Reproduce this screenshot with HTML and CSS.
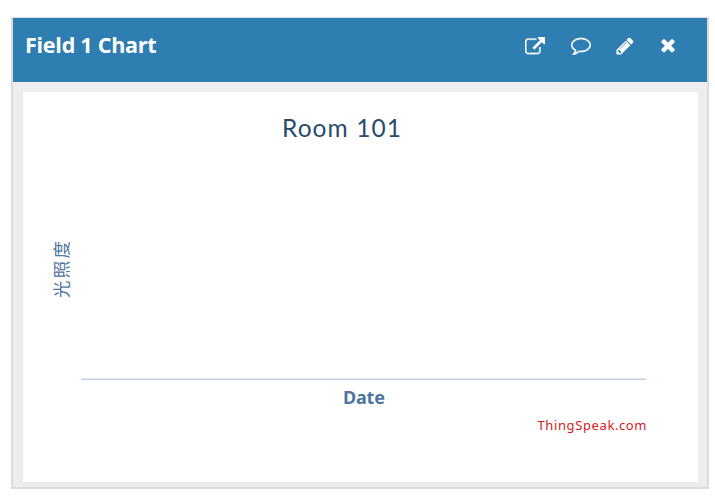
FILE: index.html
```html
<!DOCTYPE html>
<html lang="en">
<head>
<meta charset="utf-8">
<title>Field 1 Chart</title>
<link rel="stylesheet" href="styles.css">
</head>
<body>
<section class="card">
  <header class="card-header">
    <h1 class="title">Field 1 Chart</h1>
    <nav class="actions">
      <svg class="icon icon-link" viewBox="0 0 1792 1792"><path d="M1408 928v320q0 119-84.500 203.500t-203.500 84.500h-832q-119 0-203.500-84.500t-84.500-203.500v-832q0-119 84.500-203.500t203.500-84.500h704q14 0 23 9t9 23v64q0 14-9 23t-23 9h-704q-66 0-113 47t-47 113v832q0 66 47 113t113 47h832q66 0 113-47t47-113v-320q0-14 9-23t23-9h64q14 0 23 9t9 23zm384-864v512q0 26-19 45t-45 19-45-19l-176-176-652 652q-10 10-23 10t-23-10l-114-114q-10-10-10-23t10-23l652-652-176-176q-19-19-19-45t19-45 45-19h512q26 0 45 19t19 45z"/></svg>
      <svg class="icon icon-comment" viewBox="0 0 1792 1792"><path d="M896 384q-204 0-381.500 69.500t-282 187.500-104.500 255q0 112 71.500 213.500t201.500 175.500l87 50-27 96q-24 91-70 172 152-63 275-171l43-38 57 6q69 8 130 8 204 0 381.500-69.500t282-187.500 104.500-255-104.500-255-282-187.500-381.500-69.500zm896 512q0 174-120 321.500t-326 233-450 85.500q-70 0-145-8-198 175-460 242-49 14-114 22h-5q-15 0-27-10.500t-16-27.500v-1q-3-4-.5-12t2-10 4.500-9.500l6-9 7-8.500 8-9q7-8 31-34.500t34.500-38 31-39.500 32.500-51 27-59 26-76q-157-89-247.500-220t-90.500-281q0-174 120-321.500t326-233 450-85.500 450 85.500 326 233 120 321.500z"/></svg>
      <svg class="icon icon-pencil" viewBox="0 0 1792 1792"><path d="M491 1536l91-91-235-235-91 91v107h128v128h107zm523-928q0-22-22-22-10 0-17 7l-542 542q-7 7-7 17 0 22 22 22 10 0 17-7l542-542q7-7 7-17zm-54-192l416 416-832 832h-416v-416zm683 96q0 53-37 90l-166 166-416-416 166-165q36-38 90-38 53 0 91 38l235 234q37 39 37 91z"/></svg>
      <svg class="icon icon-close" viewBox="0 0 1792 1792"><path d="M1490 1322q0 40-28 68l-136 136q-28 28-68 28t-68-28l-294-294-294 294q-28 28-68 28t-68-28l-136-136q-28-28-28-68t28-68l294-294-294-294q-28-28-28-68t28-68l136-136q28-28 68-28t68 28l294 294 294-294q28-28 68-28t68 28l136 136q28 28 28 68t-28 68l-294 294 294 294q28 28 28 68z"/></svg>
    </nav>
  </header>
  <div class="card-body">
    <svg class="chart" viewBox="0 0 675 390">
      <text class="chart-title" x="259" y="45" textLength="119">Room 101</text>
      <text class="axis-y" transform="translate(44.500 206) rotate(-90)" textLength="57" lengthAdjust="spacing">光照度</text>
      <path class="axis-line" d="M58 287.200H623"/>
      <text class="axis-x" x="320" y="312" textLength="42">Date</text>
      <text class="credit" x="514.500" y="338" textLength="109">ThingSpeak.com</text>
    </svg>
  </div>
</section>
</body>
</html>
```
FILE: styles.css
```css
* { box-sizing: border-box; }
body {
  margin: 0;
  padding: 17px 6px 7px 11px;
  background: #fff;
  font-family: "Open Sans", "Noto Sans", sans-serif;
}
.card {
  width: 698px;
  height: 472px;
  border: 2px solid #dcdcdc;
  border-top-width: 1px;
  background: #ededed;
}
.card-header {
  display: flex;
  justify-content: space-between;
  align-items: flex-start;
  height: 64px;
  padding: 12px 29px 0 12px;
  background: #2e7eb2;
  color: #fff;
}
.title {
  margin: 0;
  font: bold 21.500px/30px "Open Sans", sans-serif;
  letter-spacing: -0.250px;
}
.actions {
  display: flex;
  padding-top: 6px;
}
.icon { width: 20px; height: 20px; fill: currentColor; stroke: currentColor; stroke-width: 20; }
.icon-link { margin: 1px 26px 0 0; }
.icon-comment { margin: -1px 24px 0 0; }
.icon-pencil { margin-right: 23px; stroke: none; }
.icon-close { margin-top: -1px; }
.card-body { padding: 10px; }
.chart {
  display: block;
  width: 675px;
  height: 390px;
  background: #fff;
}
.chart-title { font: 24.500px Lato, sans-serif; fill: #274b6d; }
.axis-y { font: 17.500px "Noto Sans CJK SC", sans-serif; fill: #4d759e; }
.axis-x { font: bold 18px "Noto Sans", sans-serif; fill: #4d759e; }
.axis-line { stroke: #c0d0e0; stroke-width: 1.500; }
.credit { font: 13px "Noto Sans", sans-serif; fill: #d62020; }
```
